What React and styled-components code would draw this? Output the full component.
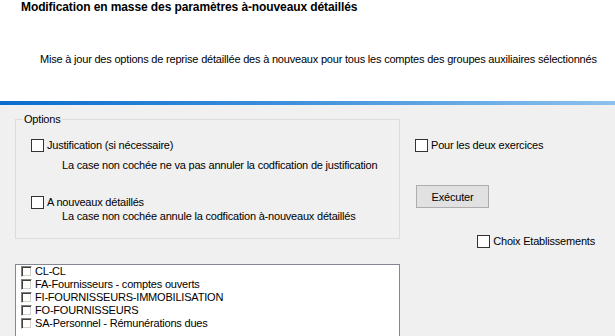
import React from "react";
import styled, { createGlobalStyle } from "styled-components";

const Global = createGlobalStyle`
  html, body { margin: 0; padding: 0; }
  body {
    background: #f0f0f0;
    font-family: "Liberation Sans", Arial, sans-serif;
    font-size: 11px;
    letter-spacing: -0.2px;
    color: #000;
    width: 615px;
    height: 336px;
    overflow: hidden;
  }
`;

const Page = styled.div`
  display: flex;
  flex-direction: column;
  width: 615px;
  height: 336px;
  overflow: hidden;
`;

const Header = styled.header`
  flex: none;
  background: #fff;
  height: 101px;
  box-sizing: border-box;
  padding: 1px 0 0 21px;
`;

const Title = styled.h1`
  margin: 0;
  font-size: 12px;
  font-weight: bold;
  line-height: 13px;
  letter-spacing: -0.1px;
  white-space: nowrap;
`;

const Subtitle = styled.p`
  margin: 39px 0 0 19px;
  font-size: 11px;
  line-height: 13px;
  white-space: nowrap;
`;

const Gradient = styled.div`
  flex: none;
  height: 4px;
  background: linear-gradient(to right, #0a6dcf 0%, #3b8edb 45%, #8dc1ed 100%);
`;

const Body = styled.main`
  flex: none;
  padding: 8px 0 0 15px;
  display: grid;
  grid-template-columns: 385px 1fr;
  column-gap: 15px;
  align-items: start;
`;

const GroupBox = styled.fieldset`
  margin: 0;
  padding: 0;
  border: 1px solid #dcdcdc;
  min-width: 0;
`;

const Legend = styled.legend`
  margin-left: 7px;
  padding: 0 1px;
  line-height: 13px;
`;

const GroupInner = styled.div`
  display: flex;
  flex-direction: column;
  padding: 13px 0 15px 15px;
`;

const CheckRow = styled.label`
  display: flex;
  align-items: center;
  gap: 3px;
  height: 13px;
  line-height: 13px;
  white-space: nowrap;
  margin-top: ${(p) => p.$mt || 0}px;
  align-self: ${(p) => p.$align || "auto"};
`;

const Box = styled.span`
  width: 13px;
  height: 13px;
  box-sizing: border-box;
  border: 1px solid #333;
  background: #fff;
  flex: none;
`;

const Note = styled.div`
  margin: ${(p) => p.$mt}px 0 0 31px;
  line-height: 13px;
  white-space: nowrap;
`;

const RightCol = styled.div`
  display: flex;
  flex-direction: column;
  align-items: flex-start;
  padding-top: 26px;
  padding-right: 20px;
`;

const Button = styled.button`
  margin-top: 33px;
  margin-left: 1px;
  width: 73px;
  height: 23px;
  background: #e1e1e1;
  border: 1px solid #adadad;
  font-family: inherit;
  font-size: 11px;
  letter-spacing: -0.2px;
  color: #000;
  padding: 0;
`;

const ListBox = styled.ul`
  grid-column: 1 / 2;
  margin: 16px 0 0 0;
  padding: 0 0 0 5px;
  list-style: none;
  background: #fff;
  border: 1px solid #828790;
  height: 90px;
`;

const Item = styled.li`
  display: flex;
  align-items: center;
  gap: 3px;
  height: 13px;
  line-height: 13px;
  white-space: nowrap;
`;

const OldBox = styled.span`
  width: 11px;
  height: 11px;
  box-sizing: border-box;
  border-top: 1px solid #808080;
  border-left: 1px solid #808080;
  border-right: 1px solid #fff;
  border-bottom: 1px solid #fff;
  box-shadow: inset 1px 1px 0 #404040, inset -1px -1px 0 #d4d0c8;
  background: #fff;
  flex: none;
`;

const items = [
  "CL-CL",
  "FA-Fournisseurs - comptes ouverts",
  "FI-FOURNISSEURS-IMMOBILISATION",
  "FO-FOURNISSEURS",
  "SA-Personnel - Rémunérations dues",
];

export default function App() {
  return (
    <Page>
      <Global />
      <Header>
        <Title>Modification en masse des paramètres à-nouveaux détaillés</Title>
        <Subtitle>
          Mise à jour des options de reprise détaillée des à nouveaux pour tous les comptes des groupes auxiliaires sélectionnés
        </Subtitle>
      </Header>
      <Gradient />
      <Body>
        <GroupBox>
          <Legend>Options</Legend>
          <GroupInner>
            <CheckRow>
              <Box />
              Justification (si nécessaire)
            </CheckRow>
            <Note $mt={7}>La case non cochée ne va pas annuler la codfication de justification</Note>
            <CheckRow $mt={24}>
              <Box />
              A nouveaux détaillés
            </CheckRow>
            <Note $mt={1}>La case non cochée annule la codfication à-nouveaux détaillés</Note>
          </GroupInner>
        </GroupBox>
        <RightCol>
          <CheckRow>
            <Box />
            Pour les deux exercices
          </CheckRow>
          <Button>Exécuter</Button>
          <CheckRow $mt={27} $align="flex-end">
            <Box />
            Choix Etablissements
          </CheckRow>
        </RightCol>
        <ListBox>
          {items.map((t) => (
            <Item key={t}>
              <OldBox />
              {t}
            </Item>
          ))}
        </ListBox>
      </Body>
    </Page>
  );
}
